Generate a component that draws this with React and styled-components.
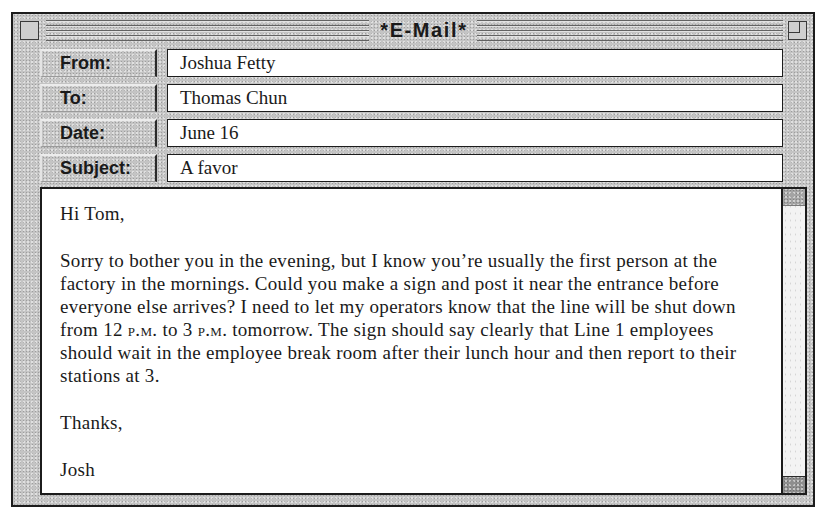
import React from "react";
import styled, { createGlobalStyle, css } from "styled-components";

const GlobalStyle = createGlobalStyle`
  html, body { margin: 0; padding: 0; background: #ffffff; }
  #root { padding: 12px 0 0 11px; }
`;

const texture = css`
  background-color: #c4c4c4;
  background-image:
    radial-gradient(rgba(0, 0, 0, 0.2) 0.7px, transparent 0.9px),
    radial-gradient(rgba(255, 255, 255, 0.5) 0.7px, transparent 0.9px);
  background-size: 3px 3px, 4px 4px;
  background-position: 0 0, 1px 2px;
`;

const Window = styled.div`
  ${texture};
  box-sizing: border-box;
  width: 804px;
  height: 495px;
  border: 2px solid #1c1c1c;
  display: flex;
  flex-direction: column;
  padding: 0 6px 10px 7px;
`;

const TitleBar = styled.div`
  flex: none;
  height: 33px;
  display: flex;
  align-items: center;
`;

const Box = styled.div`
  box-sizing: border-box;
  width: 19px;
  height: 19px;
  border: 1.5px solid #3a3a3a;
  background: #cfcfcf;
  position: relative;
  flex: none;
  ${(p) =>
    p.$zoom &&
    css`
      margin-left: 5px;
      &::after {
        content: "";
        position: absolute;
        left: -1.5px;
        top: -1.5px;
        width: 10px;
        height: 10px;
        border: 1.5px solid #3a3a3a;
      }
    `}
`;

const Lines = styled.div`
  flex: ${(p) => p.$grow} 1 0;
  height: 21px;
  margin-left: ${(p) => p.$ml || 0}px;
  background-image: repeating-linear-gradient(
    to bottom,
    #626262 0 1px,
    #e2e2e2 1px 2px,
    transparent 2px 5px
  );
`;

const Title = styled.div`
  flex: none;
  padding: 0 9px 0 11px;
  font-family: "Liberation Sans", Arial, sans-serif;
  font-weight: bold;
  font-size: 20px;
  letter-spacing: 1.6px;
  color: #1a1a1a;
`;

const Fields = styled.div`
  flex: none;
  display: flex;
  flex-direction: column;
  gap: 7px;
  margin: 2px 24px 0 20px;
`;

const Row = styled.div`
  display: flex;
  height: 28px;
  gap: 10px;
`;

const Label = styled.div`
  ${texture};
  box-sizing: border-box;
  width: 117px;
  flex: none;
  display: flex;
  align-items: center;
  padding-left: 18px;
  border-top: 2px solid #ececec;
  border-left: 2px solid #e4e4e4;
  border-right: 2px solid #2a2a2a;
  border-bottom: 1px solid #9a9a9a;
  font-family: "Liberation Sans", Arial, sans-serif;
  font-weight: bold;
  font-size: 18px;
  color: #1a1a1a;
`;

const Value = styled.div`
  box-sizing: border-box;
  flex: 1;
  display: flex;
  align-items: center;
  padding-left: 12px;
  background: #ffffff;
  border: 1.5px solid #1c1c1c;
  font-family: "Liberation Serif", "Times New Roman", serif;
  font-size: 19px;
  color: #1a1a1a;
`;

const BodyFrame = styled.div`
  box-sizing: border-box;
  flex: 1;
  min-height: 0;
  overflow: hidden;
  display: flex;
  margin: 5px 0 0 20px;
  border: 2px solid #1c1c1c;
  background: #ffffff;
`;

const Message = styled.div`
  flex: 1;
  padding: 13px 0 0 18px;
  font-family: "Liberation Serif", "Times New Roman", serif;
  font-size: 19px;
  letter-spacing: 0.3px;
  line-height: 23px;
  color: #1a1a1a;
`;

const Para = styled.p`
  margin: 0 0 24px 0;
  white-space: nowrap;
  &:last-child {
    margin-bottom: 0;
  }
`;

const SmallCaps = styled.span`
  font-variant: small-caps;
`;

const Scrollbar = styled.div`
  box-sizing: border-box;
  width: 24px;
  flex: none;
  display: flex;
  flex-direction: column;
  border-left: 2px solid #1c1c1c;
  background-color: #f3f3f3;
  background-image: radial-gradient(rgba(0, 0, 0, 0.12) 0.6px, transparent 0.8px);
  background-size: 5px 7px;
`;

const ScrollEnd = styled.div`
  ${texture};
  height: 16px;
  flex: none;
  background-color: ${(p) => p.$shade};
  ${(p) => (p.$bottom ? "border-top: 1.5px solid #2a2a2a;" : "border-bottom: 1px solid #7a7a7a;")}
`;

const Track = styled.div`
  flex: 1;
`;

const fields = [
  ["From:", "Joshua Fetty"],
  ["To:", "Thomas Chun"],
  ["Date:", "June 16"],
  ["Subject:", "A favor"],
];

export default function App() {
  return (
    <>
      <GlobalStyle />
      <Window>
        <TitleBar>
          <Box />
          <Lines $grow={328} $ml={7} />
          <Title>*E-Mail*</Title>
          <Lines $grow={311} />
          <Box $zoom />
        </TitleBar>
        <Fields>
          {fields.map(([label, value]) => (
            <Row key={label}>
              <Label>{label}</Label>
              <Value>{value}</Value>
            </Row>
          ))}
        </Fields>
        <BodyFrame>
          <Message>
            <Para>Hi Tom,</Para>
            <Para>
              Sorry to bother you in the evening, but I know you’re usually the first person at the
              <br />
              factory in the mornings. Could you make a sign and post it near the entrance before
              <br />
              everyone else arrives? I need to let my operators know that the line will be shut down
              <br />
              from 12 <SmallCaps>p.m.</SmallCaps> to 3 <SmallCaps>p.m.</SmallCaps> tomorrow. The sign should say clearly that Line 1 employees
              <br />
              should wait in the employee break room after their lunch hour and then report to their
              <br />
              stations at 3.
            </Para>
            <Para>Thanks,</Para>
            <Para>Josh</Para>
          </Message>
          <Scrollbar>
            <ScrollEnd $shade="#a4a4a4" />
            <Track />
            <ScrollEnd $shade="#8e8e8e" $bottom />
          </Scrollbar>
        </BodyFrame>
      </Window>
    </>
  );
}
